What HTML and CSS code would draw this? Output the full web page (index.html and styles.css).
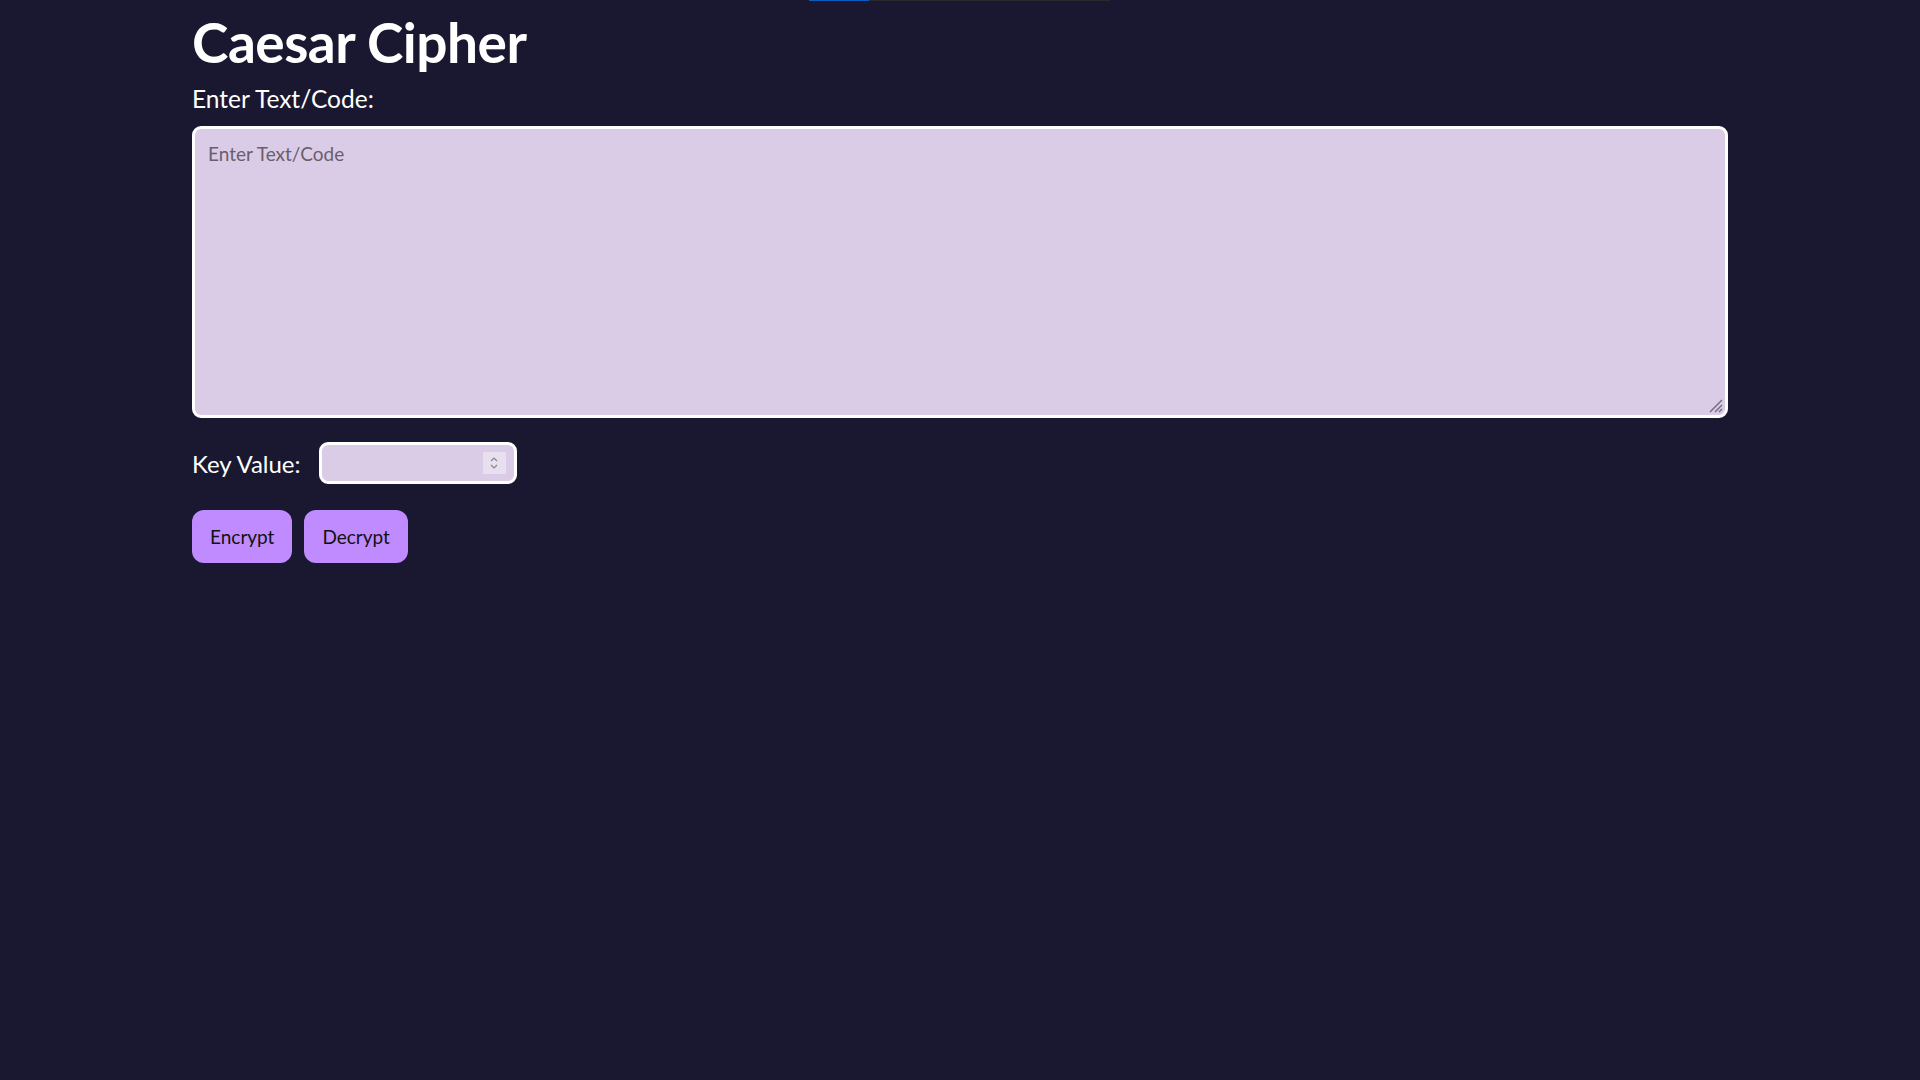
FILE: index.html
```html
<!DOCTYPE html>
<html lang="en">
<head>
<meta charset="utf-8">
<title>Caesar Cipher</title>
<link rel="stylesheet" href="styles.css">
</head>
<body>
<div class="topbar"><span class="topbar-progress"></span></div>
<main class="app">
  <h1 class="title">Caesar Cipher</h1>
  <label class="label" for="text">Enter Text/Code:</label>
  <div class="text-wrap">
    <textarea id="text" class="text-input" placeholder="Enter Text/Code"></textarea>
    <svg class="grip" width="16" height="16" viewBox="0 0 16 16"><path d="M15 3 L3 15 M15 8 L8 15 M15 12 L12 15" stroke="#6e6878" stroke-width="1.4" fill="none"/></svg>
  </div>
  <div class="key-row">
    <label class="key-label" for="key">Key Value:</label>
    <div class="key-input">
      <span class="spinner">
        <svg width="12" height="18" viewBox="0 0 12 18"><path d="M3 7 L6 4 L9 7" fill="none" stroke="#8a8490" stroke-width="1.2"/><path d="M3 11 L6 14 L9 11" fill="none" stroke="#8a8490" stroke-width="1.2"/></svg>
      </span>
    </div>
  </div>
  <div class="actions">
    <button class="btn">Encrypt</button>
    <button class="btn">Decrypt</button>
  </div>
</main>
</body>
</html>
```
FILE: styles.css
```css
html, body {
  margin: 0;
  padding: 0;
  background: #1a1830;
  height: 100%;
}
body {
  font-family: "Lato", "Open Sans", sans-serif;
  color: #ffffff;
  position: relative;
}
.topbar {
  position: absolute;
  top: 0;
  left: 809px;
  width: 301px;
  height: 1px;
  background: #2a2a2e;
}
.topbar-progress {
  display: block;
  width: 60px;
  height: 1px;
  background: #0a5cc0;
}
.app {
  width: 1536px;
  margin: 0 auto;
  display: flex;
  flex-direction: column;
  align-items: flex-start;
}
.title {
  margin: 8px 0 0;
  font-size: 55px;
  font-weight: 700;
  line-height: 68px;
  letter-spacing: -0.5px;
}
.label {
  font-size: 24.5px;
  line-height: 30px;
  margin-top: 8px;
}
.text-wrap {
  position: relative;
  margin-top: 12px;
  display: flex;
}
.text-input {
  box-sizing: border-box;
  width: 1536px;
  height: 292px;
  padding: 13px 13px;
  border: 3px solid #ffffff;
  border-radius: 9px;
  background: #dacce6;
  font-family: "Lato", "Open Sans", sans-serif;
  font-size: 19px;
  color: #333;
  resize: none;
  outline: none;
}
.text-input::placeholder {
  color: #6a5e6c;
}
.grip {
  position: absolute;
  right: 5px;
  bottom: 5px;
  pointer-events: none;
}
.key-row {
  display: flex;
  align-items: center;
  gap: 18px;
  margin-top: 24px;
}
.key-label {
  font-size: 24px;
}
.key-input {
  box-sizing: border-box;
  width: 198px;
  height: 42px;
  border: 3px solid #ffffff;
  border-radius: 9px;
  background: #dacce6;
  display: flex;
  align-items: center;
  justify-content: flex-end;
  padding-right: 8px;
}
.spinner {
  display: flex;
  align-items: center;
  justify-content: center;
  width: 23px;
  height: 22px;
  background: #e8e0ee;
}
.actions {
  display: flex;
  gap: 12px;
  margin-top: 26px;
}
.btn {
  height: 53px;
  padding: 0 18px;
  border: none;
  border-radius: 12px;
  background: #bf8bff;
  color: #111;
  font-family: "Lato", "Open Sans", sans-serif;
  font-size: 19px;
  cursor: pointer;
}
```
